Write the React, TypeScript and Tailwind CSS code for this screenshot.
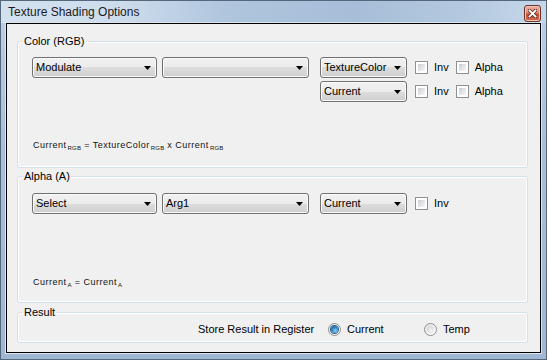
import React from "react";

const Arrow = () => (
  <svg width="7" height="4" viewBox="0 0 7 4" className="shrink-0">
    <path d="M0 0h7L3.5 4z" fill="#000" />
  </svg>
);

interface ComboProps {
  text?: string;
  className: string;
}

const Combo = ({ text, className }: ComboProps) => (
  <div
    className={`h-[21px] shrink-0 rounded-[3px] border border-[#707070] bg-[linear-gradient(#f2f2f2,#ebebeb_50%,#dddddd_50%,#cfcfcf)] shadow-[inset_0_0_0_1px_#fbfbfb] flex items-center justify-between pl-[3px] pr-[5px] text-[11px] leading-[13px] text-black ${className}`}
  >
    <span>{text}</span>
    <Arrow />
  </div>
);

const Check = ({ label }: { label: string }) => (
  <div className="flex items-center gap-[6px] text-[11px] leading-[13px]">
    <span className="block w-[13px] h-[13px] border border-[#8e8f8f] bg-white p-[2px]">
      <span className="block w-full h-full bg-[linear-gradient(135deg,#c9ccd1,#e6e7e9_60%,#f4f4f4)]" />
    </span>
    <span>{label}</span>
  </div>
);

const Radio = ({ label, checked }: { label: string; checked?: boolean }) => (
  <div className="flex items-center gap-[6px] text-[11px] leading-[13px]">
    <span className="flex items-center justify-center w-[13px] h-[13px] rounded-full border border-[#8e8f8f] bg-[linear-gradient(135deg,#e2e3e5,#ffffff)]">
      {checked ? (
        <span className="block w-[7px] h-[7px] rounded-full bg-[radial-gradient(circle_at_60%_65%,#8fd3f7,#2a7fbf_55%,#0e3f6a)] shadow-[0_0_0_1px_#2b5f86]" />
      ) : (
        <span className="block w-[7px] h-[7px] rounded-full bg-[radial-gradient(circle_at_60%_65%,#f6f6f6,#d4d6d9_70%,#b9bcc1)]" />
      )}
    </span>
    <span>{label}</span>
  </div>
);

const Sub = ({ children }: { children: React.ReactNode }) => (
  <span className="text-[6px] leading-[6px] align-[-2px] ml-[1px] tracking-[0.2px]">{children}</span>
);

const Group = ({
  title,
  className,
  children,
}: {
  title: string;
  className: string;
  children: React.ReactNode;
}) => (
  <fieldset
    className={`w-[511px] rounded-[3px] border border-[#d5dfe5] shadow-[inset_0_0_0_1px_#ffffff] ${className}`}
  >
    <legend className="ml-[5px] px-[1px] bg-[#f0f0f0] text-[11px] leading-[13px] text-black">
      {title}
    </legend>
    {children}
  </fieldset>
);

export default function App() {
  return (
    <div className="w-[547px] h-[360px] border border-[#55677b] bg-[linear-gradient(#bcd0e6,#a8bfd9_40%,#9fb7d2)] flex flex-col font-['Liberation_Sans',Arial,sans-serif] text-black">
      <div className="h-[22px] shrink-0 flex items-start pl-[7px] pr-[5px] bg-[linear-gradient(90deg,#d3e1ef_0%,#cddcec_22%,#aec5dd_42%,#a6bed8_65%,#b4c9df_85%,#c6d7ea_100%)]">
        <span className="mt-[4px] text-[12px] leading-[15px] text-[#1b1b1b]">
          Texture Shading Options
        </span>
        <div className="ml-auto mt-[4px] w-[17px] h-[17px] rounded-[3px] border border-[#6b3328] bg-[linear-gradient(#eab2a4,#dc8a75_45%,#c64d31_55%,#d2684a)] flex items-center justify-center shadow-[inset_0_0_0_1px_#f1c3b6]">
          <svg width="9" height="9" viewBox="0 0 9 9">
            <path d="M1.5 1.5l6 6M7.5 1.5l-6 6" stroke="#5a2a22" strokeWidth="3.4" strokeLinecap="square" />
            <path d="M1.5 1.5l6 6M7.5 1.5l-6 6" stroke="#ffffff" strokeWidth="1.8" strokeLinecap="square" />
          </svg>
        </div>
      </div>

      <div className="mx-[5px] h-[330px] shrink-0 border border-black bg-[#f0f0f0] shadow-[0_0_0_1px_#dbe6f1] pt-[11px] pl-[10px] flex flex-col">
        <Group title="Color (RGB)" className="h-[133px]">
          <div className="pl-[14px] pt-[9px] flex flex-col gap-[3px]">
            <div className="flex items-center">
              <Combo text="Modulate" className="w-[125px]" />
              <Combo className="w-[147px] ml-[5px]" />
              <Combo text="TextureColor" className="w-[87px] ml-[11px]" />
              <div className="ml-[8px] flex items-center gap-[7px]">
                <Check label="Inv" />
                <Check label="Alpha" />
              </div>
            </div>
            <div className="flex items-center pl-[288px]">
              <Combo text="Current" className="w-[87px]" />
              <div className="ml-[8px] flex items-center gap-[7px]">
                <Check label="Inv" />
                <Check label="Alpha" />
              </div>
            </div>
          </div>
          <div className="mt-[38px] pl-[15px] text-[9px] leading-[11px] tracking-[0.5px] text-[#111]">
            Current<Sub>RGB</Sub> = TextureColor<Sub>RGB</Sub> x Current<Sub>RGB</Sub>
          </div>
        </Group>

        <Group title="Alpha (A)" className="h-[133px] mt-[2px]">
          <div className="pl-[14px] pt-[10px] flex items-center">
            <Combo text="Select" className="w-[125px]" />
            <Combo text="Arg1" className="w-[147px] ml-[5px]" />
            <Combo text="Current" className="w-[87px] ml-[11px]" />
            <div className="ml-[8px]">
              <Check label="Inv" />
            </div>
          </div>
          <div className="mt-[63px] pl-[15px] text-[9px] leading-[11px] tracking-[0.5px] text-[#111]">
            Current<Sub>A</Sub> = Current<Sub>A</Sub>
          </div>
        </Group>

        <Group title="Result" className="h-[37px] mt-[3px]">
          <div className="mt-[4px] pl-[180px] flex items-center text-[11px] leading-[13px]">
            <span className="w-[130px]">Store Result in Register</span>
            <div className="w-[96px]">
              <Radio label="Current" checked />
            </div>
            <Radio label="Temp" />
          </div>
        </Group>
      </div>
    </div>
  );
}
